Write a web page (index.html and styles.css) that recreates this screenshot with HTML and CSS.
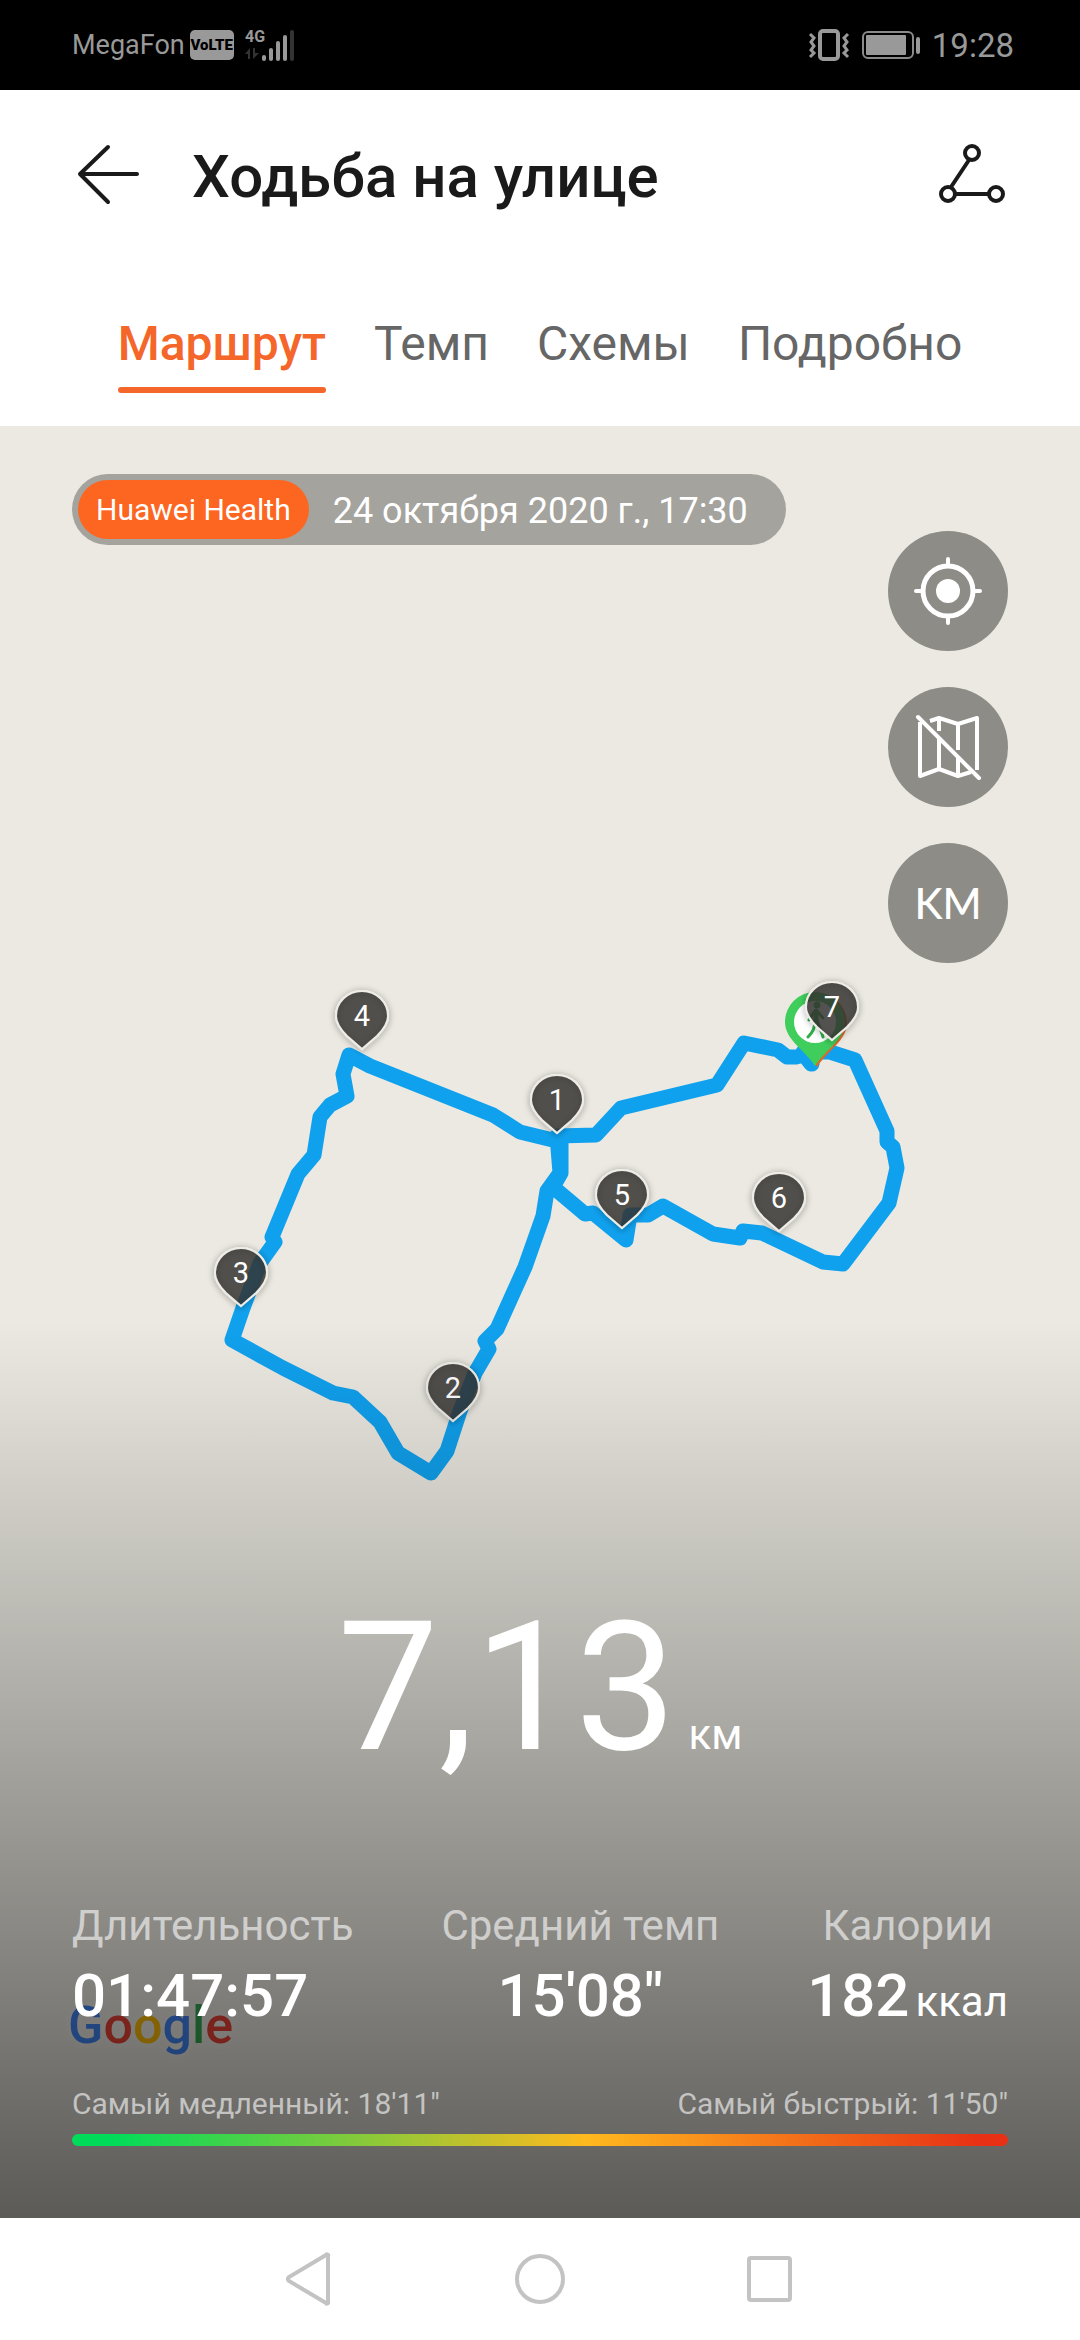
FILE: index.html
```html
<!DOCTYPE html>
<html lang="ru">
<head>
<meta charset="utf-8">
<meta name="viewport" content="width=device-width, initial-scale=1">
<title>Ходьба на улице</title>
<link rel="stylesheet" href="styles.css">
</head>
<body>
<div class="statusbar">
  <div class="status-group">
    <span class="carrier">MegaFon</span>
    <span class="volte">VoLTE</span>
    <svg class="signal" width="52" height="34" viewBox="0 0 52 34" aria-hidden="true">
      <text x="0" y="14" class="signal-type">4G</text>
      <g fill="#333"><path d="M0 26l5-6v11H3v-5zM8 20h2v5h4l-6 6z"/><rect x="45" y="2" width="4" height="31" rx="2"/></g>
      <g fill="#999"><rect x="17" y="27" width="4" height="6" rx="2"/><rect x="24" y="20" width="4" height="13" rx="2"/><rect x="31" y="13" width="4" height="20" rx="2"/><rect x="38" y="7" width="4" height="26" rx="2"/></g>
    </svg>
  </div>
  <div class="status-group">
    <svg width="42" height="34" viewBox="0 0 42 34" fill="none" stroke="#999" stroke-width="4" aria-hidden="true">
      <rect x="12" y="3" width="18" height="28" rx="3"/>
      <path stroke-width="3" d="M2 6l4 4-3 4 3 4-3 4 3 3-4 4M40 6l-4 4 3 4-3 4 3 4-3 3 4 4"/>
    </svg>
    <svg class="battery" width="60" height="30" viewBox="0 0 60 30" aria-hidden="true">
      <rect x="2" y="2" width="50" height="26" rx="5" fill="none" stroke="#8a8a8a" stroke-width="2"/>
      <rect x="5" y="5" width="40" height="20" rx="1" fill="#999"/>
      <rect x="55" y="7" width="4" height="17" rx="2" fill="#999"/>
    </svg>
    <time class="clock">19:28</time>
  </div>
</div>

<header class="header">
  <button class="icon-button" type="button" aria-label="Назад">
    <svg width="72" height="72" viewBox="0 0 72 72" fill="none" stroke="#1a1a1a" stroke-width="4" stroke-linecap="round" stroke-linejoin="round"><path d="M36 9L8 36l28 28M8 36h57"/></svg>
  </button>
  <h1 class="title">Ходьба на улице</h1>
  <button class="icon-button" type="button" aria-label="Трек">
    <svg width="72" height="72" viewBox="0 0 72 72" fill="none" stroke="#1a1a1a" stroke-width="4"><circle cx="36" cy="15" r="7"/><circle cx="12" cy="56" r="7"/><circle cx="60" cy="56" r="7"/><path d="M33 22L15 49M19 56h34"/></svg>
  </button>
</header>

<nav class="tabs">
  <button class="tab tab-active" type="button">Маршрут</button>
  <button class="tab" type="button">Темп</button>
  <button class="tab" type="button">Схемы</button>
  <button class="tab" type="button">Подробно</button>
</nav>

<main class="map">
  <svg class="route" viewBox="0 426 1080 1792" aria-hidden="true">
    <defs>
      <filter id="shadow" x="-30%" y="-30%" width="160%" height="160%"><feDropShadow dx="0" dy="1" stdDeviation="3" flood-color="#000" flood-opacity=".6"/></filter>
      <g id="pin">
        <path filter="url(#shadow)" fill="none" stroke="#eeece6" stroke-width="2" d="M0-1L-15-14C-22-21-26-27-26-34A26 25 0 0 1 26-34C26-27 22-21 15-14Z"/>
        <path fill="#33312f" fill-opacity=".84" stroke="#eeece6" stroke-width="2" d="M0-1L-15-14C-22-21-26-27-26-34A26 25 0 0 1 26-34C26-27 22-21 15-14Z"/>
      </g>
    </defs>
    <path class="track" d="M811 1064L804 1055L796 1057H787L778 1050L744 1043L717 1085L621 1108L596 1135L557 1136L560 1173L547 1191L543 1216L525 1267L497 1329L485 1341L489 1349L475 1373L460 1411L447 1451L431 1473L398 1453L380 1422L353 1397L333 1393L283 1368L232 1340L243 1308L260 1263L275 1242L272 1237L298 1174L314 1155L320 1117L330 1105L347 1096L343 1074L349 1055L370 1066L493 1115L520 1132L561 1142V1173L553 1187L585 1214L593 1213L626 1240L630 1215H648L663 1206L713 1234L740 1238L743 1231L762 1233L823 1262L843 1264L889 1203L897 1168L893 1147L887 1142L887 1131L855 1060L830 1052H803L812 1064"/>
    <path fill="#d96a2b" d="M817 1067C806 1049 787 1040 787 1023A30 30 0 0 1 847 1023C847 1040 829 1049 817 1067Z"/>
    <path fill="#3fce5c" d="M815 1066C805 1050 785 1040 785 1022A30 30 0 0 1 845 1022C845 1040 825 1050 815 1066Z"/>
    <circle cx="815" cy="1022" r="21" fill="#fff"/>
    <g fill="none" stroke="#2fae4c" stroke-width="3" stroke-linecap="round"><circle cx="817" cy="1005" r="2" fill="#2fae4c"/><path stroke-width="5" d="M816 1011v9"/><path d="M815 1020c0 8-2 12-7 17M817 1020c2 7 5 12 6 17M814 1012l-5 8M818 1012l5 6"/></g>
    <g class="pins">
      <use href="#pin" x="557" y="1134"/><text x="557" y="1110">1</text>
      <use href="#pin" x="453" y="1422"/><text x="453" y="1398">2</text>
      <use href="#pin" x="241" y="1307"/><text x="241" y="1283">3</text>
      <use href="#pin" x="362" y="1050"/><text x="362" y="1026">4</text>
      <use href="#pin" x="622" y="1229"/><text x="622" y="1205">5</text>
      <use href="#pin" x="779" y="1232"/><text x="779" y="1208">6</text>
      <use href="#pin" x="832" y="1041"/><text x="832" y="1017">7</text>
    </g>
  </svg>
  <span class="google"><span class="g-blue">G</span><span class="g-red">o</span><span class="g-yellow">o</span><span class="g-blue">g</span><span class="g-green">l</span><span class="g-red">e</span></span>

  <div class="map-top">
    <div class="chip"><span class="source">Huawei Health</span><time class="date">24 октября 2020 г., 17:30</time></div>
    <div class="map-buttons">
      <button class="round" type="button" aria-label="Моё местоположение">
        <svg width="120" height="120" viewBox="0 0 120 120" fill="none" stroke="#fff" stroke-width="5" stroke-linecap="round"><circle cx="60" cy="60" r="25"/><circle cx="60" cy="60" r="12" fill="#fff" stroke="none"/><path stroke-width="4" d="M60 28v6M60 86v6M28 60h6M86 60h6"/></svg>
      </button>
      <button class="round" type="button" aria-label="Скрыть карту">
        <svg width="120" height="120" viewBox="0 0 120 120" fill="none" stroke="#fff" stroke-width="4" stroke-linejoin="round"><path stroke-linecap="round" d="M30 30L91 91"/><path d="M32 35V89L51 82L70 89L83 85M51 52V82M70 71V89M42 34L51 31L70 37L89 31V83M51 31V44M70 37V63"/></svg>
      </button>
      <button class="round km" type="button">KM</button>
    </div>
  </div>

  <section class="summary">
    <p class="distance"><span class="distance-value">7,13</span><span class="distance-unit">км</span></p>
    <dl class="stats">
      <div class="stat stat-start"><dt>Длительность</dt><dd>01:47:57</dd></div>
      <div class="stat"><dt>Средний темп</dt><dd>15'08"</dd></div>
      <div class="stat"><dt>Калории</dt><dd>182<span class="unit">ккал</span></dd></div>
    </dl>
    <div class="pace">
      <div class="pace-labels"><span>Самый медленный: 18'11"</span><span>Самый быстрый: 11'50"</span></div>
      <div class="pace-bar"></div>
    </div>
  </section>
</main>

<footer class="sysnav">
  <button class="icon-button" type="button" aria-label="Назад"><svg width="72" height="72" viewBox="0 0 72 72"><path d="M54 13v46a1 1 0 0 1-2 1L15 38q-2-2 0-4L52 12a1 1 0 0 1 2 1z"/></svg></button>
  <button class="icon-button" type="button" aria-label="Домой"><svg width="72" height="72" viewBox="0 0 72 72"><circle cx="36" cy="36" r="23"/></svg></button>
  <button class="icon-button" type="button" aria-label="Недавние"><svg width="72" height="72" viewBox="0 0 72 72"><rect x="15" y="15" width="41" height="42" rx="2"/></svg></button>
</footer>
</body>
</html>
```
FILE: styles.css
```css
* { box-sizing: border-box; }

body {
  margin: 0;
  min-height: 100vh;
  display: flex;
  flex-direction: column;
  background: #fff;
  color: #1a1a1a;
  font-family: Roboto, "Noto Sans", sans-serif;
}

h1, p, dl, dd { margin: 0; }

button {
  padding: 0;
  border: 0;
  background: none;
  color: inherit;
  font: inherit;
}

svg { display: block; }

.statusbar {
  display: flex;
  justify-content: space-between;
  align-items: center;
  height: 90px;
  padding: 0 66px 0 72px;
  background: #000;
  color: #999;
}

.status-group { display: flex; align-items: center; }
.carrier { font-size: 27px; line-height: 32px; }

.volte {
  width: 44px;
  margin: 0 11px 0 5px;
  border-radius: 5px;
  background: #999;
  color: #000;
  font-size: 15px;
  font-weight: 900;
  line-height: 30px;
  text-align: center;
}

.signal-type { fill: #999; font-size: 16px; font-weight: 700; }
.battery { margin: 0 11px; }
.clock { font-size: 33px; line-height: 40px; padding-top: 2px; }

.header {
  display: flex;
  align-items: center;
  gap: 48px;
  height: 168px;
  padding: 0 72px;
}

.icon-button { flex: none; }
.title { flex: 1; padding-top: 6px; font-size: 60px; font-weight: 500; line-height: 72px; }

.tabs {
  display: flex;
  justify-content: center;
  gap: 48px;
  padding: 54px 0 33px;
}

.tab { color: #666; font-size: 48px; line-height: 64px; }
.tab::after {
  content: "";
  display: block;
  height: 6px;
  margin-top: 11px;
  border-radius: 3px;
}
.tab-active { color: #f4662a; font-weight: 500; }
.tab-active::after { background: #f4662a; }

.map {
  position: relative;
  flex: 1;
  display: flex;
  flex-direction: column;
  background: #ebe9e1;
}

.route { position: absolute; top: 0; left: 0; width: 100%; }
.track {
  fill: none;
  stroke: #10a1ee;
  stroke-width: 15px;
  stroke-linejoin: round;
  stroke-linecap: round;
}
.pins text { fill: #fff; font-size: 29px; text-anchor: middle; }

.google {
  position: absolute;
  left: 68px;
  bottom: 162px;
  font-size: 52px;
  font-weight: 500;
  line-height: 60px;
  text-shadow: 0 0 8px rgba(255, 255, 255, .5);
}
.g-blue { color: #4285f4; }
.g-red { color: #ea4335; }
.g-yellow { color: #fbbc05; }
.g-green { color: #34a853; }

.map-top {
  position: relative;
  display: flex;
  justify-content: space-between;
  align-items: flex-start;
  padding: 48px 72px 0;
}

.chip {
  display: flex;
  align-items: center;
  padding: 6px 38px 6px 6px;
  border-radius: 36px;
  background: #a4a39d;
  color: #fff;
}
.source {
  padding: 0 18px;
  border-radius: 30px;
  background: #fc6621;
  font-size: 30px;
  line-height: 59px;
}
.date { margin-left: 24px; padding-top: 2px; font-size: 36px; line-height: 48px; }

.map-buttons { display: flex; flex-direction: column; gap: 36px; padding-top: 57px; }
.round {
  width: 120px;
  height: 120px;
  border-radius: 50%;
  background: #8d8c86;
  color: #fff;
}
.km { font-family: Lato, sans-serif; font-size: 42px; font-weight: 500; }

.summary {
  position: relative;
  margin-top: auto;
  padding: 268px 72px 72px;
  background: linear-gradient(rgba(0, 0, 0, 0), rgba(0, 0, 0, .61));
  color: #fff;
}

.distance { display: flex; justify-content: center; align-items: baseline; gap: 12px; }
.distance-value { font-size: 180px; line-height: 200px; }
.distance-unit { font-size: 42px; }

.stats { display: flex; justify-content: space-between; margin-top: 110px; }
.stat { display: flex; flex-direction: column; align-items: center; gap: 4px; }
.stat-start { align-items: flex-start; }
.stat dt { color: rgba(255, 255, 255, .6); font-size: 42px; line-height: 56px; }
.stat dd { font-size: 60px; font-weight: 500; line-height: 76px; }
.unit { margin-left: 6px; font-size: 42px; font-weight: 400; line-height: 42px; }

.pace { margin-top: 50px; }
.pace-labels {
  display: flex;
  justify-content: space-between;
  color: rgba(255, 255, 255, .6);
  font-size: 30px;
  line-height: 40px;
}
.pace-bar {
  height: 12px;
  margin-top: 10px;
  border-radius: 6px;
  background: linear-gradient(90deg, #00dc5a 4%, #ffb91e 55%, #e83015 97%);
}

.sysnav {
  display: flex;
  justify-content: center;
  align-items: center;
  gap: 158px;
  height: 122px;
}
.sysnav svg { fill: none; stroke: #c3c3c3; stroke-width: 4px; }
```
